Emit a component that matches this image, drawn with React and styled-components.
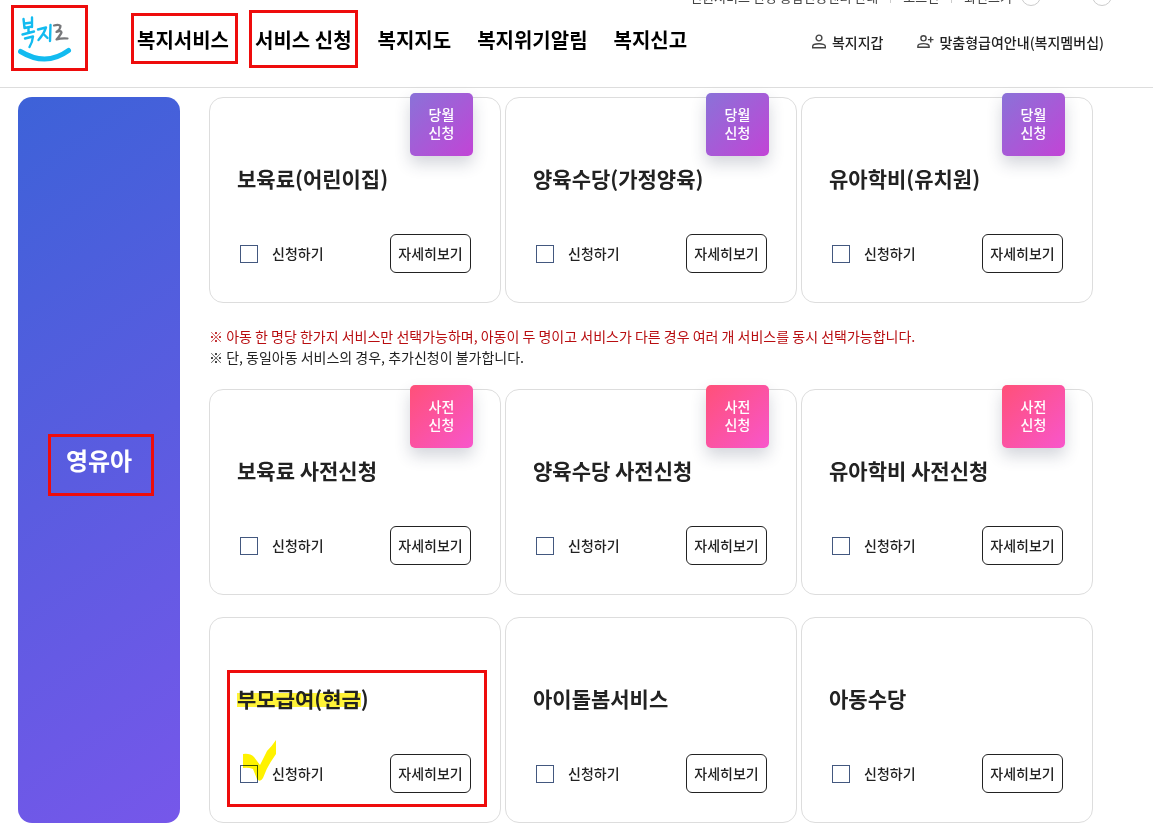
import React from 'react';
import styled, { createGlobalStyle, css } from 'styled-components';

const GlobalStyle = createGlobalStyle`
    * {
        box-sizing: border-box;
    }

    body {
        margin: 0;
        background-color: #ffffff;
        color: #222222;
        font-family: "Noto Sans CJK KR", "Noto Sans", sans-serif;
        font-size: 14px;
    }

    button, input {
        font: inherit;
        color: inherit;
    }

    a {
        color: inherit;
        text-decoration: none;
    }
`;

const marked = css`
    position: relative;

    &::after {
        content: '';
        position: absolute;
        inset: ${({ $inset }) => $inset};
        border: 3px solid #ee0c0c;
        pointer-events: none;
    }
`;

const Header = styled.header`
    border-bottom: 1px solid #dddddd;
`;

const TopBar = styled.div`
    display: flex;
    justify-content: flex-end;
    align-items: flex-end;
    height: 7px;
    padding-right: 41px;
    overflow: hidden;
    color: #444444;
    font-size: 13px;
    line-height: 20px;
    white-space: nowrap;
`;

const TopLink = styled.a`
    flex-shrink: 0;
    height: 20px;
`;

const TopDivider = styled.span`
    flex-shrink: 0;
    width: 1px;
    height: 12px;
    margin: 0 12px 4px;
    background-color: #cccccc;
`;

const TopLabel = styled.span`
    flex-shrink: 0;
    height: 20px;
    padding-right: 9px;
`;

const ZoomButton = styled.button`
    flex-shrink: 0;
    width: 20px;
    height: 20px;
    margin-bottom: 1px;
    padding: 0;
    border: 1px solid #cccccc;
    border-radius: 50%;
    background: none;
    line-height: 14px;

    & + & {
        margin-left: 51px;
    }
`;

const HeaderRow = styled.div`
    display: flex;
    align-items: center;
    height: 66px;
    margin-bottom: 14px;
    padding: 0 49px 0 18px;
`;

const LogoLink = styled.a`
    ${marked}
    display: block;
    width: 56px;
    height: 50px;
    margin-right: 63px;

    svg {
        display: block;
    }
`;

const Nav = styled.nav`
    display: flex;
    gap: 26px;
    color: #000000;
    font-size: 20px;
    font-weight: 700;
    line-height: 30px;
    white-space: nowrap;
`;

const NavLink = styled.a`
    ${({ $inset }) => $inset && marked}
`;

const Utils = styled.div`
    display: flex;
    gap: 34px;
    margin-left: auto;
    padding-top: 4px;
    font-weight: 500;
    line-height: 20px;
    white-space: nowrap;
`;

const UtilLink = styled.a`
    display: flex;
    align-items: center;
    gap: 5px;
`;

const Main = styled.main`
    display: grid;
    grid-template-columns: 162px 1fr;
    gap: 29px;
    padding: 9px 60px 16px 18px;
`;

const Side = styled.aside`
    display: flex;
    justify-content: center;
    align-items: center;
    border-radius: 14px;
    background: linear-gradient(145deg, #3d62d8 0%, #5a5ce0 50%, #7657ea 100%);
`;

const SideTitle = styled.h2`
    ${marked}
    margin: 0;
    color: #ffffff;
    font-size: 24px;
    font-weight: 700;
    line-height: 36px;
`;

const Cards = styled.div`
    display: grid;
    grid-template-columns: repeat(3, 1fr);
    gap: 4px;

    & + & {
        margin-top: 22px;
    }
`;

const Notice = styled.div`
    margin: 23px 0 21px;
    line-height: 21px;

    p {
        margin: 0;
    }
`;

const Warning = styled.p`
    color: #b80d10;
`;

const CardBox = styled.article`
    position: relative;
    padding: 65px 29px 29px 27px;
    border: 1px solid #dddddd;
    border-radius: 14px;
`;

const badgeColors = {
    '당월': '#8a72d8, #c244d6',
    '사전': '#ff5078, #f856cc',
};

const Badge = styled.span`
    position: absolute;
    top: -5px;
    right: 27px;
    width: 63px;
    height: 63px;
    padding-top: 12px;
    border-radius: 5px;
    background: linear-gradient(135deg, ${({ $kind }) => badgeColors[$kind]});
    box-shadow: 0 8px 16px rgba(40, 50, 80, 0.2);
    color: #ffffff;
    font-weight: 500;
    line-height: 18px;
    text-align: center;
`;

const CardTitle = styled.h3`
    margin: 0 0 41px;
    font-size: 21px;
    font-weight: 700;
    line-height: 30px;
    white-space: nowrap;
`;

const Highlight = styled.mark`
    color: inherit;
    background: linear-gradient(transparent 32%, #fff338 32%, #fff338 80%, transparent 80%);
`;

const CardRow = styled.div`
    display: flex;
    justify-content: space-between;
    align-items: center;
    font-weight: 500;
`;

const Apply = styled.label`
    display: flex;
    align-items: center;
    gap: 14px;
    padding-left: 3px;
`;

const ApplyText = styled.span`
    padding-bottom: 2px;
`;

const Checkbox = styled.input`
    appearance: none;
    width: 18px;
    height: 18px;
    margin: 0;
    border: 1px solid #43587f;
    background-color: #ffffff;

    &:checked {
        background-color: #43587f;
    }
`;

const DetailButton = styled.button`
    width: 81px;
    height: 39px;
    padding: 0 0 2px;
    border: 1px solid #222222;
    border-radius: 6px;
    background-color: #ffffff;
    white-space: nowrap;
`;

const Outline = styled.div`
    position: absolute;
    inset: 52px 13px 15px 17px;
    border: 3px solid #ee0c0c;
    pointer-events: none;
`;

const CheckMark = styled.svg`
    position: absolute;
    left: 32px;
    top: 122px;
    mix-blend-mode: multiply;
    pointer-events: none;
`;

const navItems = [
    { name: '복지서비스', inset: '-12px -9px -9px -6px' },
    { name: '서비스 신청', inset: '-15px -6px -13px -6px' },
    { name: '복지지도' },
    { name: '복지위기알림' },
    { name: '복지신고' },
];

const monthly = [
    { name: '보육료(어린이집)', badge: '당월' },
    { name: '양육수당(가정양육)', badge: '당월' },
    { name: '유아학비(유치원)', badge: '당월' },
];

const advance = [
    { name: '보육료 사전신청', badge: '사전' },
    { name: '양육수당 사전신청', badge: '사전' },
    { name: '유아학비 사전신청', badge: '사전' },
];

const others = [
    { name: '부모급여(현금)', picked: true },
    { name: '아이돌봄서비스' },
    { name: '아동수당' },
];

const Logo = () => (
    <svg width="56" height="50" viewBox="0 0 56 50" fill="none" strokeLinecap="round" strokeLinejoin="round">
        <g stroke="#12bbf0" strokeWidth="2.4">
            <path d="M5.500 4 L6.500 13 L14 11.500 M14 2.500 L14 12 M6.500 8.500 L14 7.500" />
            <path d="M10.500 13 L10.500 18 M4.500 19.500 L16 16.500" />
            <path d="M7 23.500 L15 21.500 Q14.500 27 11.500 32" />
            <path d="M20 14.500 L28 12.500 Q26 19 20.500 25 M25 18.500 L29.500 23" />
            <path d="M32.500 10 L32 26" />
        </g>
        <path
            d="M36 10.500 Q41 9 42.500 11 Q42.500 14 38.500 17 Q43.500 15 43.500 17.500 Q42.500 20 38.500 24.500 Q43 23 49.500 23.500"
            stroke="#77787b"
            strokeWidth="2.2"
        />
        <path d="M2.500 36.500 Q28 52 50.500 35.500" stroke="#12bbf0" strokeWidth="5" />
    </svg>
);

const PersonIcon = () => (
    <svg width="16" height="16" viewBox="0 0 16 16" fill="none" stroke="#444444" strokeWidth="1.400">
        <circle cx="8" cy="4" r="2.900" />
        <path d="M1.700 13.800 V12.300 C1.700 8.900 14.300 8.900 14.300 12.300 V13.800 Z" />
    </svg>
);

const PersonAddIcon = () => (
    <svg width="17" height="16" viewBox="0 0 17 16" fill="none" stroke="#444444" strokeWidth="1.400">
        <circle cx="6.500" cy="4.300" r="2.600" />
        <path d="M0.900 13.300 V12.100 C0.900 8.800 12.100 8.800 12.100 12.100 V13.300 Z" />
        <path d="M13.700 2.800 V8.400 M10.900 5.600 H16.500" />
    </svg>
);

const ServiceCard = ({ name, badge, picked }) => (
    <CardBox>
        {badge && <Badge $kind={badge}>{badge}<br />신청</Badge>}
        <CardTitle>
            {picked ? <><Highlight>{name.slice(0, -1)}</Highlight>{name.slice(-1)}</> : name}
        </CardTitle>
        <CardRow>
            <Apply>
                <Checkbox type="checkbox" />
                <ApplyText>신청하기</ApplyText>
            </Apply>
            <DetailButton type="button">자세히보기</DetailButton>
        </CardRow>
        {picked && (
            <>
                <Outline />
                <CheckMark width="36" height="44" viewBox="0 0 36 44">
                    <path d="M1 14 Q8 13 12 17 L18 25 L25 11 Q30 6 34 0 L34 14 L30 20 Q25 27 21 38 Q18 43 15 39 L11 29 Q6 27 1 28 Z" fill="#fff200" />
                </CheckMark>
            </>
        )}
    </CardBox>
);

const CardList = ({ items }) => (
    <Cards>
        {items.map((item) => <ServiceCard key={item.name} {...item} />)}
    </Cards>
);

const App = () => {
    return (
        <>
            <GlobalStyle />
            <Header>
                <TopBar>
                    <TopLink href="#">민원서비스 신청 통합인증센터 안내</TopLink>
                    <TopDivider />
                    <TopLink href="#">로그인</TopLink>
                    <TopDivider />
                    <TopLabel>화면크기</TopLabel>
                    <ZoomButton type="button" aria-label="축소">-</ZoomButton>
                    <ZoomButton type="button" aria-label="확대">+</ZoomButton>
                </TopBar>
                <HeaderRow>
                    <LogoLink href="#" aria-label="복지로" $inset="-10px -14px -6px -7px">
                        <Logo />
                    </LogoLink>
                    <Nav>
                        {navItems.map(({ name, inset }) => (
                            <NavLink key={name} href="#" $inset={inset}>{name}</NavLink>
                        ))}
                    </Nav>
                    <Utils>
                        <UtilLink href="#"><PersonIcon />복지지갑</UtilLink>
                        <UtilLink href="#"><PersonAddIcon />맞춤형급여안내(복지멤버십)</UtilLink>
                    </Utils>
                </HeaderRow>
            </Header>
            <Main>
                <Side>
                    <SideTitle $inset="-8px -22px -18px -18px">영유아</SideTitle>
                </Side>
                <section>
                    <CardList items={monthly} />
                    <Notice>
                        <Warning>※ 아동 한 명당 한가지 서비스만 선택가능하며, 아동이 두 명이고 서비스가 다른 경우 여러 개 서비스를 동시 선택가능합니다.</Warning>
                        <p>※ 단, 동일아동 서비스의 경우, 추가신청이 불가합니다.</p>
                    </Notice>
                    <CardList items={advance} />
                    <CardList items={others} />
                </section>
            </Main>
        </>
    );
};

export default App;
